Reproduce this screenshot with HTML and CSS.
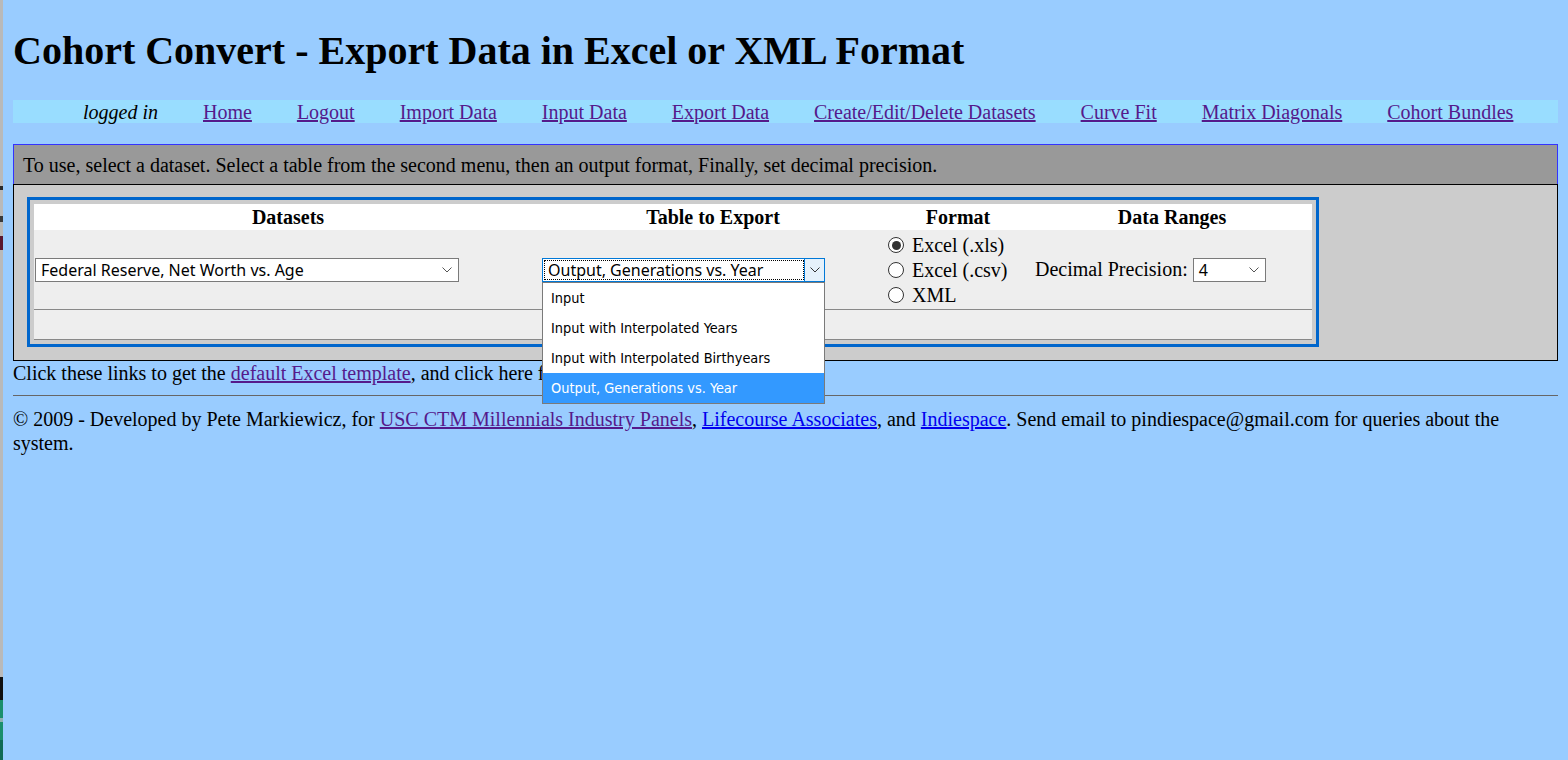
FILE: index.html
```html
<!DOCTYPE html>
<html lang="en">
<head>
<meta charset="utf-8">
<title>Cohort Convert - Export Data</title>
<link rel="stylesheet" href="styles.css">
</head>
<body>
<div class="edge"></div>
<h1 class="title">Cohort Convert - Export Data in Excel or XML Format</h1>
<nav class="nav">
  <span class="nav-status">logged in</span>
  <a href="#" class="visited">Home</a>
  <a href="#" class="visited">Logout</a>
  <a href="#" class="visited">Import Data</a>
  <a href="#" class="visited">Input Data</a>
  <a href="#" class="visited">Export Data</a>
  <a href="#" class="visited">Create/Edit/Delete Datasets</a>
  <a href="#" class="visited">Curve Fit</a>
  <a href="#" class="visited">Matrix Diagonals</a>
  <a href="#" class="visited">Cohort Bundles</a>
</nav>

<section class="panel">
  <div class="panel-head">To use, select a dataset. Select a table from the second menu, then an output format, Finally, set decimal precision.</div>
  <div class="panel-body">
    <div class="form-table">
      <div class="grid head-row">
        <div class="th">Datasets</div>
        <div class="th">Table to Export</div>
        <div class="th">Format</div>
        <div class="th">Data Ranges</div>
      </div>
      <div class="grid data-row">
        <div class="td td-datasets">
          <div class="select select-dataset">
            <span class="select-text">Federal Reserve, Net Worth vs. Age</span>
            <svg class="chev" width="10" height="6" viewBox="0 0 10 6"><path d="M0.5 0.5 L5 5 L9.5 0.5" fill="none" stroke="#555" stroke-width="1"/></svg>
          </div>
        </div>
        <div class="td td-table">
          <div class="select select-open">
            <span class="select-focus">Output, Generations vs. Year</span>
            <span class="select-btn"><svg width="10" height="6" viewBox="0 0 10 6"><path d="M0.5 0.5 L5 5 L9.5 0.5" fill="none" stroke="#333" stroke-width="1"/></svg></span>
            <ul class="dropdown">
              <li>Input</li>
              <li>Input with Interpolated Years</li>
              <li>Input with Interpolated Birthyears</li>
              <li class="active">Output, Generations vs. Year</li>
            </ul>
          </div>
        </div>
        <div class="td td-format">
          <label class="radio"><span class="dot checked"></span>Excel (.xls)</label>
          <label class="radio"><span class="dot"></span>Excel (.csv)</label>
          <label class="radio"><span class="dot"></span>XML</label>
        </div>
        <div class="td td-ranges">
          <span>Decimal Precision:</span>
          <div class="select select-prec">
            <span class="select-text">4</span>
            <svg class="chev" width="10" height="6" viewBox="0 0 10 6"><path d="M0.5 0.5 L5 5 L9.5 0.5" fill="none" stroke="#555" stroke-width="1"/></svg>
          </div>
        </div>
      </div>
      <div class="grid empty-row"></div>
    </div>
  </div>
</section>

<p class="links">Click these links to get the <a href="#" class="visited">default Excel template</a>, and click here for the <a href="#" class="visited">XML template</a>.</p>
<hr class="rule">
<p class="credits">© 2009 - Developed by Pete Markiewicz, for <a href="#" class="visited">USC CTM Millennials Industry Panels</a>, <a href="#">Lifecourse Associates</a>, and <a href="#">Indiespace</a>. Send email to pindiespace@gmail.com for queries about the system.</p>
</body>
</html>
```

FILE: styles.css
```css
html {
  background: #99ccff;
}
body {
  margin: 0;
  padding: 0 10px 10px 13px;
  background: #99ccff;
  color: #000;
  font-family: "Liberation Serif", "Times New Roman", serif;
  font-size: 20px;
  line-height: 23px;
}
.edge {
  position: fixed;
  left: 0;
  top: 0;
  width: 3px;
  height: 100%;
  background: linear-gradient(to bottom,
    #b9b9b9 0 186px, #2a2a2a 186px 190px, #b9b9b9 190px 216px,
    #3a3a3a 216px 222px, #b9b9b9 222px 236px, #5a1830 236px 250px,
    #b9b9b9 250px 677px, #101010 677px 700px, #1b8f6c 700px 718px,
    #8fb0b0 718px 722px, #1b8f6c 722px 740px, #0f6a55 740px 760px);
}
a {
  color: #0000ee;
}
a.visited {
  color: #551a8b;
}
.title {
  margin: 28px 0 26px;
  font-size: 40px;
  line-height: 46px;
  font-weight: bold;
}
.nav {
  display: flex;
  gap: 45px;
  height: 23px;
  line-height: 24px;
  padding-left: 70px;
  background: #99ddff;
  white-space: nowrap;
  margin-bottom: 21px;
}
.nav-status {
  font-style: italic;
}

/* panel */
.panel-head {
  background: #999999;
  border: 1px solid #3333ff;
  border-bottom: 0;
  height: 39px;
  line-height: 40px;
  padding-left: 9px;
}
.panel-body {
  background: #cccccc;
  border: 1px solid #000;
  padding: 12px 13px 13px 13px;
}
.form-table {
  width: 1278px;
  border: 3px solid #0066cc;
  padding: 4px;
  background: #cccccc;
}
.grid {
  display: grid;
  grid-template-columns: 508px 342px 148px 280px;
}
.head-row {
  background: #ffffff;
  height: 26px;
  line-height: 26px;
}
.th {
  text-align: center;
  font-weight: bold;
}
.data-row {
  background: #eeeeee;
  height: 79px;
  border-bottom: 1px solid #888888;
}
.empty-row {
  background: #eeeeee;
  height: 29px;
  border-bottom: 1px solid #888888;
}
.td {
  display: flex;
  align-items: center;
}
.td-datasets {
  padding-left: 1px;
}
.td-format {
  flex-direction: column;
  align-items: flex-start;
  justify-content: center;
  padding-left: 4px;
  padding-top: 1px;
}
.td-ranges {
  padding-left: 3px;
  gap: 5px;
}

/* fake selects */
.select {
  position: relative;
  height: 24px;
  box-sizing: border-box;
  border: 1px solid #7a7a7a;
  background: #fff;
  display: flex;
  align-items: center;
  font-family: "Noto Sans", "Open Sans", sans-serif;
  font-size: 16px;
  line-height: 22px;
  color: #000;
}
.select-text {
  flex: 1;
  padding-left: 5px;
  white-space: nowrap;
}
.chev {
  margin-right: 6px;
  flex: none;
}
.select-dataset {
  width: 424px;
}
.select-prec {
  width: 73px;
}
.select-open {
  width: 283px;
  border-color: #0078d7;
  padding: 1px 0 1px 1px;
}
.select-focus {
  flex: 1;
  height: 20px;
  line-height: 20px;
  padding-left: 4px;
  outline: 1px dotted #000;
  outline-offset: -1px;
  white-space: nowrap;
}
.select-btn {
  width: 21px;
  height: 24px;
  margin: -1px -1px -1px 0;
  box-sizing: border-box;
  border: 1px solid #0078d7;
  background: #e5f1fb;
  display: flex;
  align-items: center;
  justify-content: center;
}
.dropdown {
  position: absolute;
  left: -1px;
  top: 23px;
  width: 283px;
  margin: 0;
  padding: 0;
  list-style: none;
  background: #fff;
  border: 1px solid #7a7a7a;
  box-sizing: border-box;
  font-family: "DejaVu Sans Condensed", "DejaVu Sans", sans-serif;
  font-stretch: condensed;
  font-size: 14.4px;
  z-index: 5;
}
.dropdown li {
  height: 30px;
  line-height: 30px;
  padding-left: 8px;
  white-space: nowrap;
}
.dropdown li.active {
  background: #3399ff;
  color: #fff;
}

/* radios */
.radio {
  display: flex;
  align-items: center;
  height: 25px;
  gap: 8px;
}
.dot {
  width: 16px;
  height: 16px;
  box-sizing: border-box;
  border: 1px solid #333;
  border-radius: 50%;
  background: #fff;
  display: flex;
  align-items: center;
  justify-content: center;
}
.dot.checked::after {
  content: "";
  width: 9px;
  height: 9px;
  border-radius: 50%;
  background: #333;
}

/* below */
.links {
  margin: 0;
  line-height: 24px;
}
.rule {
  margin: 10px 0 11px;
  border: 0;
  border-top: 1px solid #666;
  height: 0;
}
.credits {
  margin: 0;
  line-height: 24px;
}
```
